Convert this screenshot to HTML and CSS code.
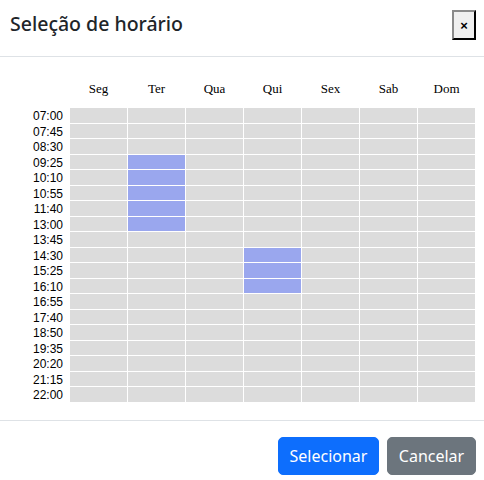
FILE: index.html
```html
<!DOCTYPE html>
<html lang="pt">
<head>
<meta charset="utf-8">
<link rel="stylesheet" href="styles.css">
</head>
<body>
<div class="modal">
  <div class="modal-header">
    <h5 class="modal-title">Seleção de horário</h5>
    <button class="close-btn" type="button">×</button>
  </div>
  <div class="modal-body">
    <div class="schedule">
      <div class="corner"></div>
      <div class="day">Seg</div><div class="day">Ter</div><div class="day">Qua</div><div class="day">Qui</div><div class="day">Sex</div><div class="day">Sab</div><div class="day">Dom</div>
    </div>
    <div class="schedule grid" id="grid"></div>
  </div>
  <div class="modal-footer">
    <button class="btn btn-primary" type="button">Selecionar</button>
    <button class="btn btn-secondary" type="button">Cancelar</button>
  </div>
</div>
<script src="app.js"></script>
</body>
</html>
```
FILE: app.js
```js
(function () {
  var times = ["07:00","07:45","08:30","09:25","10:10","10:55","11:40","13:00","13:45","14:30","15:25","16:10","16:55","17:40","18:50","19:35","20:20","21:15","22:00"];
  var selected = { "1": [3,4,5,6,7], "3": [9,10,11] };
  var grid = document.getElementById("grid");
  times.forEach(function (t, r) {
    var lab = document.createElement("div");
    lab.className = "time";
    lab.textContent = t;
    grid.appendChild(lab);
    for (var d = 0; d < 7; d++) {
      var c = document.createElement("div");
      c.className = "cell";
      if (selected[d] && selected[d].indexOf(r) !== -1) c.className += " on";
      grid.appendChild(c);
    }
  });
})();
```
FILE: styles.css
```css
* { box-sizing: border-box; }
html, body { margin: 0; padding: 0; background: #fff; }
body { font-family: "Noto Sans", "Open Sans", sans-serif; color: #212529; overflow: hidden; }

.modal { width: 484px; }

.modal-header {
  display: flex;
  justify-content: space-between;
  align-items: flex-start;
  height: 57px;
  padding: 12px 8px 0 10px;
  border-bottom: 1px solid #dee2e6;
}
.modal-title {
  margin: 0;
  font-size: 19.5px;
  line-height: 24px;
  font-weight: 500;
  color: #212529;
}
.close-btn {
  margin-top: -2px;
  width: 24px;
  height: 30px;
  padding: 0;
  background: #efefef;
  border: 2px outset #8a8a8a;
  border-right-color: #333;
  border-bottom-color: #333;
  font-family: "Liberation Sans", sans-serif;
  font-size: 13px;
  font-weight: 700;
  color: #000;
  line-height: 1;
}

.modal-body {
  padding: 24px 9px 18px 16px;
}
.schedule {
  display: grid;
  grid-template-columns: 53px repeat(7, 57px);
  column-gap: 1px;
}
.day {
  font-family: "Liberation Serif", serif;
  font-size: 13px;
  line-height: 15px;
  text-align: center;
  color: #000;
  margin-bottom: 12px;
}
.grid {
  grid-auto-rows: 14.5px;
  row-gap: 1px;
}
.time {
  font-family: "Liberation Sans", sans-serif;
  font-size: 12px;
  line-height: 17px;
  text-align: right;
  padding-right: 6px;
  color: #000;
  white-space: nowrap;
}
.cell { background: #dcdcdc; }
.cell.on { background: #9aa7ee; }

.modal-footer {
  display: flex;
  justify-content: flex-end;
  gap: 8px;
  padding: 16px 8px 5px 0;
  border-top: 1px solid #dee2e6;
}
.btn {
  height: 38px;
  border: 1px solid transparent;
  border-radius: 5px;
  font-family: "Noto Sans", "Open Sans", sans-serif;
  font-size: 16px;
  line-height: 22px;
  color: #fff;
  padding: 0;
  text-align: center;
}
.btn-primary { background: #0d6efd; border-color: #0d6efd; width: 101px; }
.btn-secondary { background: #6c757d; border-color: #6c757d; width: 89px; }
```
